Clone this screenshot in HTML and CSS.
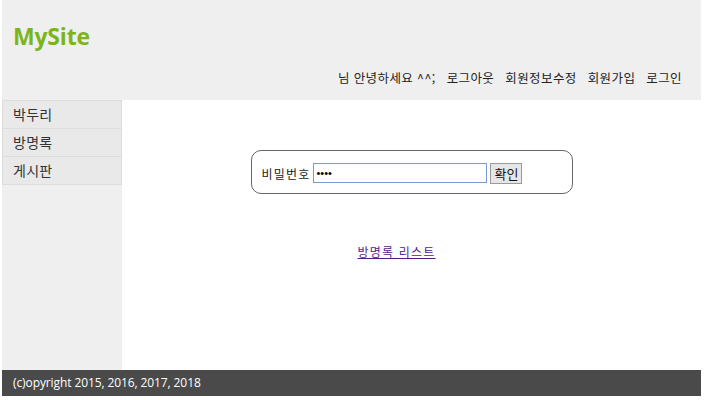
FILE: index.html
```html
<!DOCTYPE html>
<html lang="ko">
<head>
<meta charset="utf-8">
<title>MySite</title>
<link rel="stylesheet" href="styles.css">
</head>
<body>
<div class="container">
  <header class="header">
    <h1 class="logo">MySite</h1>
    <ul class="topnav">
      <li>님 안녕하세요 ^^;</li>
      <li><a href="#">로그아웃</a></li>
      <li><a href="#">회원정보수정</a></li>
      <li><a href="#">회원가입</a></li>
      <li><a href="#">로그인</a></li>
    </ul>
  </header>
  <div class="body">
    <nav class="sidebar">
      <ul>
        <li><a href="#">박두리</a></li>
        <li><a href="#">방명록</a></li>
        <li><a href="#">게시판</a></li>
      </ul>
    </nav>
    <main class="content">
      <form class="pwform">
        <label class="pwlabel">비밀번호</label>
        <input class="pwinput" type="password" value="1234">
        <button class="pwbtn" type="button">확인</button>
      </form>
      <div class="listlink"><a href="#">방명록 리스트</a></div>
    </main>
  </div>
  <footer class="footer">(c)opyright 2015, 2016, 2017, 2018</footer>
</div>
</body>
</html>
```
FILE: styles.css
```css
* { box-sizing: border-box; }
body {
  margin: 0;
  background: #fff;
  font-family: "Noto Sans CJK KR", "Noto Sans", sans-serif;
}
.container {
  width: 699px;
  margin-left: 2px;
}
.header {
  height: 100px;
  background: #efefef;
  display: flex;
  flex-direction: column;
  padding: 20px 19px 0 11px;
}
.logo {
  margin: 0;
  font-family: "Open Sans", "Noto Sans", sans-serif;
  font-weight: 700;
  font-size: 23px;
  line-height: 32px;
  color: #7cb519;
  letter-spacing: -0.2px;
}
.topnav {
  list-style: none;
  margin: 17px 0 0;
  padding: 0;
  display: flex;
  justify-content: flex-end;
  gap: 11px;
  font-size: 12.5px;
  line-height: 18px;
  color: #222;
  letter-spacing: 0.4px;
}
.topnav a { color: #222; text-decoration: none; }
.body {
  display: flex;
  height: 270px;
}
.sidebar {
  width: 120px;
  background: #efefef;
  flex: none;
}
.sidebar ul { list-style: none; margin: 0; padding: 0; }
.sidebar li {
  height: 28px;
  border: 1px solid #dcdcdc;
  border-top: none;
  background: #e9e9e9;
  padding-left: 10px;
  padding-bottom: 2px;
  display: flex;
  align-items: center;
}
.sidebar li:first-child { border-top: 1px solid #dcdcdc; height: 29px; }
.sidebar a {
  color: #333;
  text-decoration: none;
  font-size: 14px;
  letter-spacing: 0.3px;
}
.content {
  flex: 1;
  display: flex;
  flex-direction: column;
  align-items: center;
  padding-top: 50px;
}
.pwform {
  width: 322px;
  height: 44px;
  border: 1px solid #666;
  border-radius: 10px;
  display: flex;
  align-items: center;
  padding-left: 10px;
  padding-top: 2px;
  gap: 3px;
  font-size: 12px;
  color: #222;
}
.pwlabel { letter-spacing: 1.2px; }
.pwinput {
  width: 174px;
  height: 20px;
  border: 1px solid #7a9cd3;
  padding: 0 2px;
  font-size: 11px;
  outline: none;
}
.pwbtn {
  height: 21px;
  width: 32px;
  padding: 0;
  margin-left: 0;
  border: 1px solid #9a9a9a;
  background: #e6e6e6;
  font-family: "Noto Sans CJK KR", sans-serif;
  font-size: 13px;
  color: #111;
}
.listlink {
  margin-top: 49px;
  margin-right: 30px;
  font-size: 12px;
  letter-spacing: 1.2px;
}
.listlink a { color: #551a8b; }
.footer {
  height: 26px;
  background: #4a4a4a;
  color: #fff;
  font-family: "Open Sans", "Noto Sans", sans-serif;
  font-size: 12px;
  line-height: 26px;
  padding-left: 11px;
  letter-spacing: -0.1px;
}
```
